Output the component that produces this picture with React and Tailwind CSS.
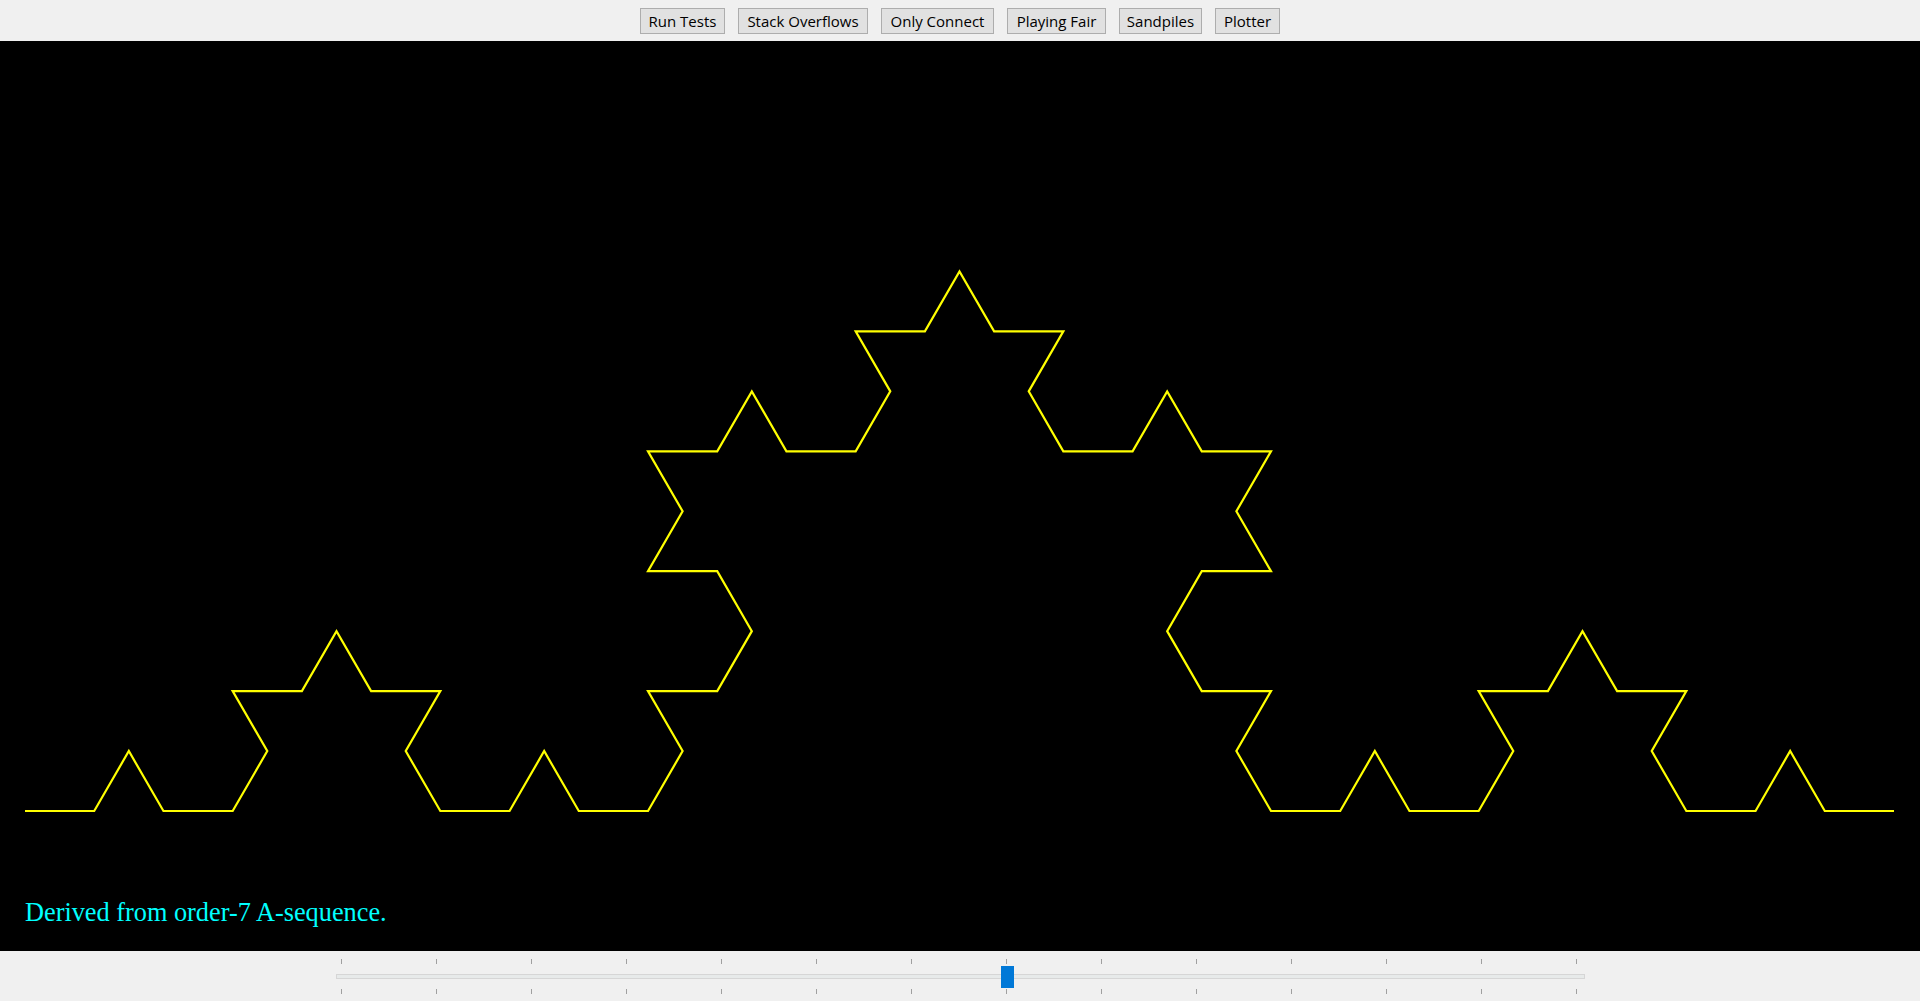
import React from 'react';

// Koch curve, order 3, drawn between two points on the canvas
function koch(p0, p1, n) {
    if (n === 0) return [p0];
    const dx = (p1[0] - p0[0]) / 3;
    const dy = (p1[1] - p0[1]) / 3;
    const a = [p0[0] + dx, p0[1] + dy];
    const b = [p0[0] + 2 * dx, p0[1] + 2 * dy];
    const peak = [a[0] + dx * 0.5 + dy * 0.8660254, a[1] - dx * 0.8660254 + dy * 0.5];
    return [
        ...koch(p0, a, n - 1),
        ...koch(a, peak, n - 1),
        ...koch(peak, b, n - 1),
        ...koch(b, p1, n - 1),
    ];
}

const start = [25, 770];
const end = [1894, 770];
const points = [...koch(start, end, 3), end].map((p) => `${p[0].toFixed(2)},${p[1].toFixed(2)}`).join(' ');

const buttons = [
    { label: 'Run Tests', w: 'w-[85px]' },
    { label: 'Stack Overflows', w: 'w-[130px]' },
    { label: 'Only Connect', w: 'w-[113px]' },
    { label: 'Playing Fair', w: 'w-[99px]' },
    { label: 'Sandpiles', w: 'w-[83px]' },
    { label: 'Plotter', w: 'w-[65px]' },
];

const ticks = Array.from({ length: 14 }, (_, i) => i);

export default function App() {
    return (
        <div className="w-[1920px] h-[1001px] flex flex-col bg-[#f0f0f0] overflow-hidden">
            {/* Toolbar */}
            <div className="h-[41px] shrink-0 flex justify-center items-start pt-[8px] gap-[13px] bg-[#f0f0f0]">
                {buttons.map((b) => (
                    <button
                        key={b.label}
                        className={`${b.w} h-[26px] shrink-0 border border-[#adadad] bg-[#e1e1e1] text-[15px] leading-none text-black font-['Open_Sans',sans-serif] flex items-center justify-center`}
                    >
                        {b.label}
                    </button>
                ))}
            </div>

            {/* Canvas */}
            <div className="relative h-[910px] shrink-0 bg-black">
                <svg width="1920" height="910" viewBox="0 0 1920 910" className="block">
                    <polyline points={points} fill="none" stroke="#ffff00" strokeWidth="2.2" strokeLinejoin="miter" />
                </svg>
                <div className="absolute left-[25px] top-[859px] text-[26.3px] leading-none text-[#00ffff] font-['Liberation_Serif',serif]">
                    Derived from order-7 A-sequence.
                </div>
            </div>

            {/* Slider */}
            <div className="h-[50px] shrink-0 bg-[#f0f0f0]">
                <div className="relative w-[1249px] h-full mx-auto pt-[8px] flex flex-col">
                    <div className="h-[5px] pl-[5px] pr-[7px] flex justify-between">
                        {ticks.map((t) => (
                            <div key={t} className="w-px h-full bg-[#a0a0a0]" />
                        ))}
                    </div>
                    <div className="mt-[10px] h-[5px] border border-[#d6d6d6] bg-[#e7eaea]" />
                    <div className="mt-[10px] h-[5px] pl-[5px] pr-[7px] flex justify-between">
                        {ticks.map((t) => (
                            <div key={t} className="w-px h-full bg-[#a0a0a0]" />
                        ))}
                    </div>
                    <div className="absolute top-[15px] left-[665px] w-[13px] h-[22px] bg-[#0078d7]" />
                </div>
            </div>
        </div>
    );
}
